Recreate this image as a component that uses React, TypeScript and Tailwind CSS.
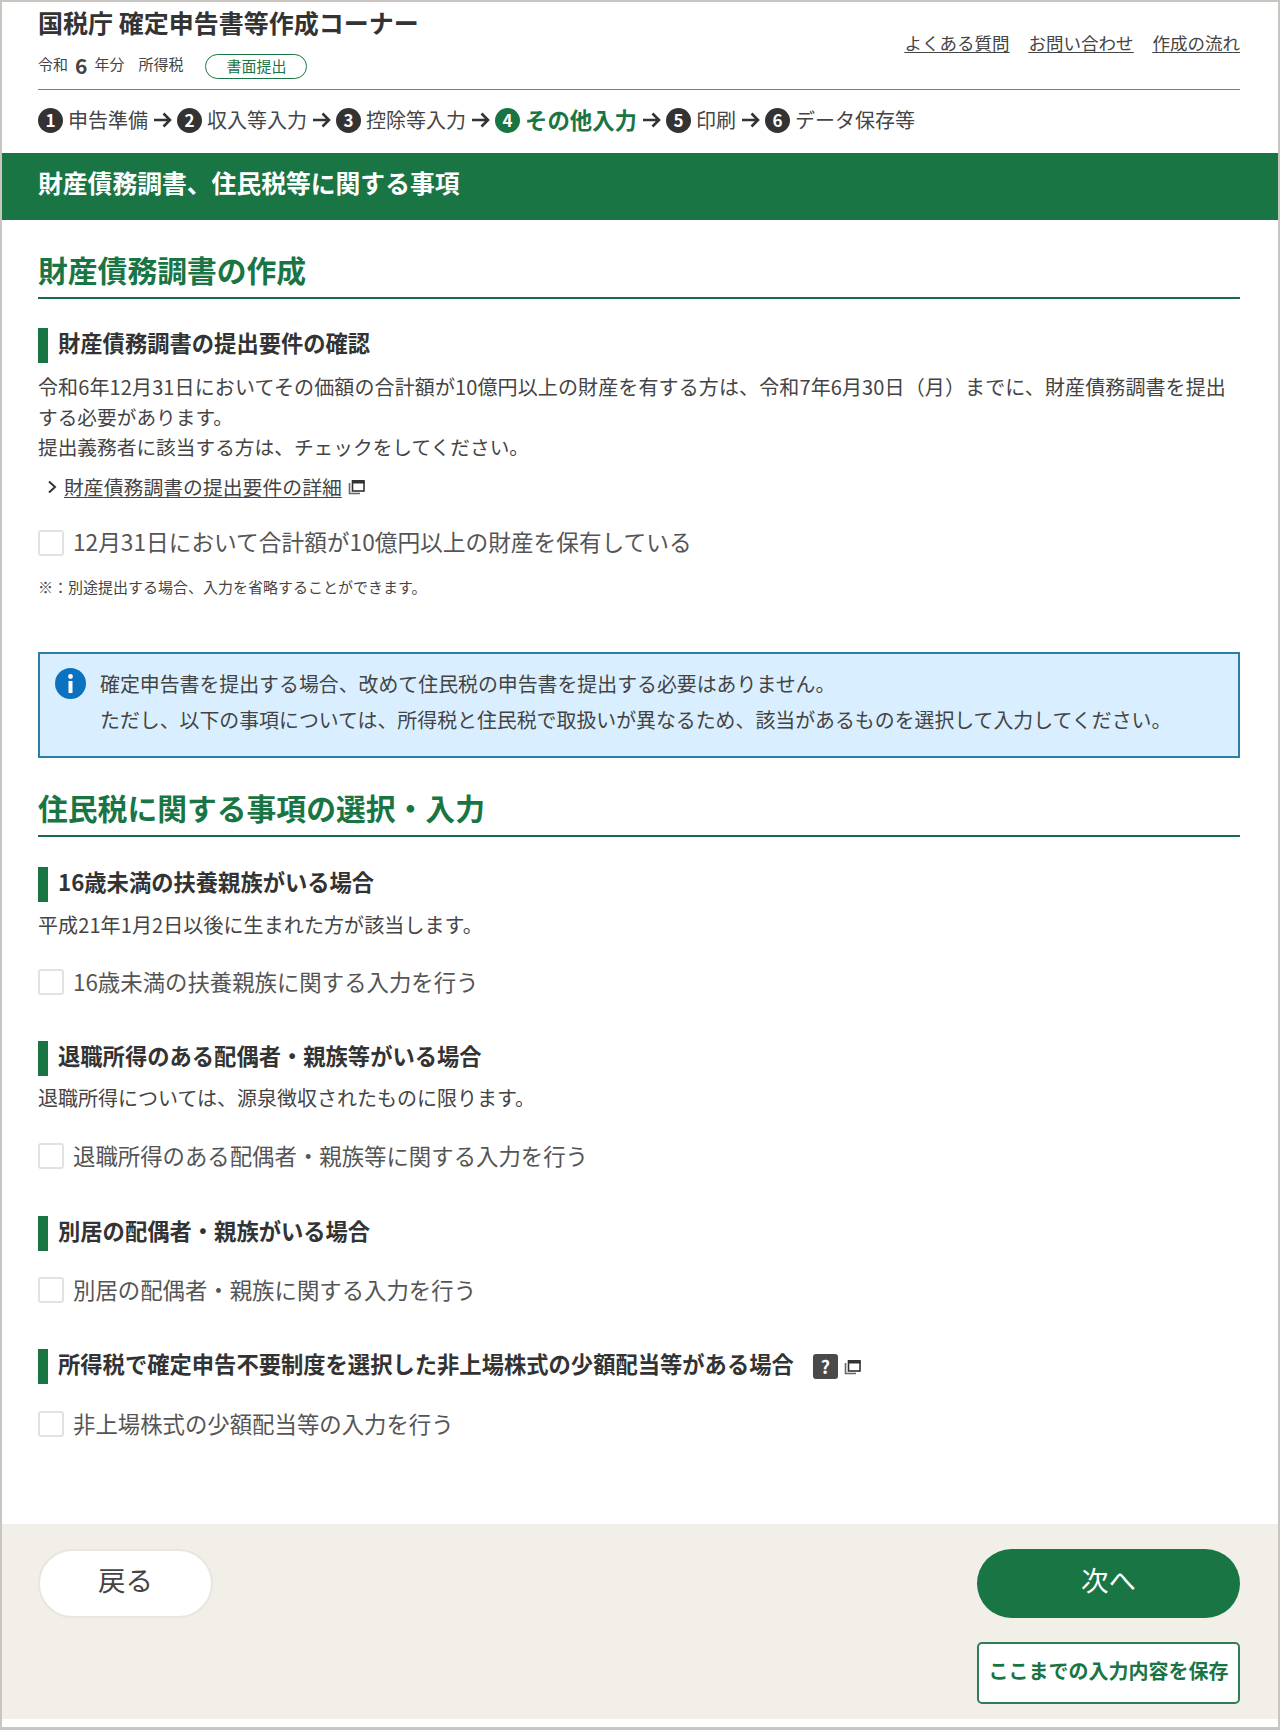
import type { ReactNode } from "react";

const steps = [
  { no: 1, label: "申告準備" },
  { no: 2, label: "収入等入力" },
  { no: 3, label: "控除等入力" },
  { no: 4, label: "その他入力", active: true },
  { no: 5, label: "印刷" },
  { no: 6, label: "データ保存等" },
];

const fontStack = { fontFamily: '"Noto Sans CJK JP", "Noto Sans", sans-serif' };

const WindowIcon = () => (
  <svg width="17" height="16" viewBox="0 0 17 16" className="shrink-0">
    <path d="M1.5 4v10.5H12" fill="none" stroke="#666" strokeWidth="1.6" />
    <rect x="4.5" y="2" width="11.5" height="10" fill="#fff" stroke="#333" strokeWidth="1.6" />
    <rect x="4" y="1" width="12.5" height="3.5" fill="#333" />
  </svg>
);

const SectionTitle = ({ children, className }: { children: ReactNode; className: string }) => (
  <h2 className={`h-[49px] border-b-2 border-[#1a6b48] text-[29.8px] leading-[38px] font-bold text-[#1a7544] ${className}`}>
    {children}
  </h2>
);

const SubTitle = ({ children, className }: { children: ReactNode; className: string }) => (
  <h3 className={`flex h-[35px] items-center border-l-[10px] border-[#1a7544] pb-[6px] pl-[10px] text-[22.3px] font-bold text-[#333] ${className}`}>
    {children}
  </h3>
);

const CheckRow = ({ label, className }: { label: string; className: string }) => (
  <label className={`flex h-[30px] items-center gap-[9px] text-[#555] ${className}`}>
    <span className="h-[26px] w-[26px] shrink-0 rounded-[3px] border-2 border-[#e2e2e2] bg-white" />
    <span className="pb-[1px]">{label}</span>
  </label>
);

export default function App() {
  return (
    <div
      className="flex h-[1730px] w-[1280px] flex-col border-t-2 border-r-2 border-b-[3px] border-l-2 border-[#c9c6c2] bg-white"
      style={fontStack}
    >
      <header className="h-[151px]">
        <div className="mr-[38px] ml-[36px] flex h-[88px] justify-between border-b-[1.5px] border-[#5f8a7c]">
          <div>
            <div className="mt-[2px] text-[25px] leading-[36px] font-bold text-[#333]">国税庁 確定申告書等作成コーナー</div>
            <div className="mt-[10px] flex items-center text-[15px] text-[#444]">
              <span>令和</span>
              <span className="mx-[7px] text-[21px] leading-[26px] font-bold">6</span>
              <span>年分</span>
              <span className="ml-[14px]">所得税</span>
              <span className="mt-[4px] ml-[22px] flex h-[25px] w-[102px] items-center justify-center rounded-full border-[1.5px] border-[#1a7544] text-[#1a7544]">
                書面提出
              </span>
            </div>
          </div>
          <nav className="flex gap-[19px] pt-[27px] text-[17.5px] leading-[28px] text-[#444] underline underline-offset-2">
            <a>よくある質問</a>
            <a>お問い合わせ</a>
            <a>作成の流れ</a>
          </nav>
        </div>
        <ol className="mx-[36px] mt-[16px] flex h-[28px] items-center text-[20px] leading-[28px] text-[#444]">
          {steps.map((step, i) => (
            <li key={step.no} className="flex items-center">
              {i > 0 && (
                <svg width="19" height="16" viewBox="0 0 19 16" className="mx-[5px]">
                  <path d="M1 8h16M10.5 1.5 17 8l-6.5 6.5" fill="none" stroke="#333" strokeWidth="2.6" />
                </svg>
              )}
              <span
                className={`mr-[5px] flex h-[25px] w-[25px] items-center justify-center rounded-full text-[17px] font-bold text-white ${step.active ? "bg-[#1a7544]" : "bg-[#333]"}`}
              >
                {step.no}
              </span>
              <span className={step.active ? "pb-[2px] text-[22.4px] font-bold text-[#1a7544]" : ""}>{step.label}</span>
            </li>
          ))}
        </ol>
      </header>

      <div className="flex h-[67px] items-center bg-[#1a7544] px-[36px] pb-[8px] text-[24.8px] font-bold text-white">
        財産債務調書、住民税等に関する事項
      </div>

      <main className="flex-1 pr-[38px] pl-[36px] text-[20px] text-[#444]">
        <SectionTitle className="mt-[30px]">財産債務調書の作成</SectionTitle>
        <SubTitle className="mt-[29px]">財産債務調書の提出要件の確認</SubTitle>
        <div className="mt-[9px] leading-[30px]">
          <p className="tracking-[0.12px]">令和6年12月31日においてその価額の合計額が10億円以上の財産を有する方は、令和7年6月30日（月）までに、財産債務調書を提出</p>
          <p className="text-[19.7px]">
            する必要があります。
            <br />
            提出義務者に該当する方は、チェックをしてください。
          </p>
        </div>
        <div className="mt-[10px] flex h-[30px] items-center text-[19.85px] text-[#444]">
          <svg width="12" height="16" viewBox="0 0 12 16" className="mr-[6px] ml-[8px]">
            <path d="M3 2.5 9 8l-6 5.5" fill="none" stroke="#333" strokeWidth="2" />
          </svg>
          <a className="underline underline-offset-2">財産債務調書の提出要件の詳細</a>
          <span className="ml-[6px]">
            <WindowIcon />
          </span>
        </div>
        <CheckRow className="mt-[26px] text-[22.7px]" label="12月31日において合計額が10億円以上の財産を保有している" />
        <p className="mt-[17px] text-[15px] leading-[24px] text-[#444]">※：別途提出する場合、入力を省略することができます。</p>

        <div className="mt-[53px] flex h-[106px] gap-[14px] border-2 border-[#2b7fa6] bg-[#d9efff] pt-[12px] pl-[15px] text-[19.9px]">
          <svg width="31" height="31" viewBox="0 0 31 31" className="mt-[2px] shrink-0">
            <circle cx="15.5" cy="15.5" r="15.5" fill="#0b72c0" />
            <rect x="13.5" y="13" width="4" height="12" fill="#fff" />
            <circle cx="15.5" cy="8.5" r="2.4" fill="#fff" />
          </svg>
          <p className="leading-[36px]">
            確定申告書を提出する場合、改めて住民税の申告書を提出する必要はありません。
            <br />
            ただし、以下の事項については、所得税と住民税で取扱いが異なるため、該当があるものを選択して入力してください。
          </p>
        </div>

        <SectionTitle className="mt-[30px]">住民税に関する事項の選択・入力</SectionTitle>
        <SubTitle className="mt-[30px]">16歳未満の扶養親族がいる場合</SubTitle>
        <p className="mt-[8px] leading-[30px] tracking-[0.1px]">平成21年1月2日以後に生まれた方が該当します。</p>
        <CheckRow className="mt-[27px] text-[22.4px]" label="16歳未満の扶養親族に関する入力を行う" />

        <SubTitle className="mt-[44px]">退職所得のある配偶者・親族等がいる場合</SubTitle>
        <p className="mt-[7px] leading-[30px]">退職所得については、源泉徴収されたものに限ります。</p>
        <CheckRow className="mt-[28px] text-[22.4px]" label="退職所得のある配偶者・親族等に関する入力を行う" />

        <SubTitle className="mt-[45px]">別居の配偶者・親族がいる場合</SubTitle>
        <CheckRow className="mt-[24px] text-[22.4px]" label="別居の配偶者・親族に関する入力を行う" />

        <SubTitle className="mt-[44px]">
          所得税で確定申告不要制度を選択した非上場株式の少額配当等がある場合
          <span className="ml-[19px] flex items-center gap-[6px] pt-[6px]">
            <span className="flex h-[25px] w-[25px] items-center justify-center rounded-[3px] bg-[#4a4a4a] text-[18px] text-white">?</span>
            <WindowIcon />
          </span>
        </SubTitle>
        <CheckRow className="mt-[25px] text-[22.4px]" label="非上場株式の少額配当等の入力を行う" />
      </main>

      <footer className="mb-[8px] flex h-[195px] justify-between bg-[#f2efe8] pt-[25px] pr-[38px] pl-[36px]">
        <button className="h-[69px] w-[175px] rounded-full border-2 border-[#e8e6e0] bg-white pb-[8px] text-[27.5px] text-[#444]">戻る</button>
        <div className="flex w-[263px] flex-col gap-[24px]">
          <button className="h-[69px] rounded-full bg-[#1a7544] pb-[8px] text-[27.5px] text-white">次へ</button>
          <button className="h-[62px] rounded-[5px] border-[2.5px] border-[#2f7d58] bg-white pb-[4px] text-[20px] font-bold text-[#1a7544]">
            ここまでの入力内容を保存
          </button>
        </div>
      </footer>
    </div>
  );
}
